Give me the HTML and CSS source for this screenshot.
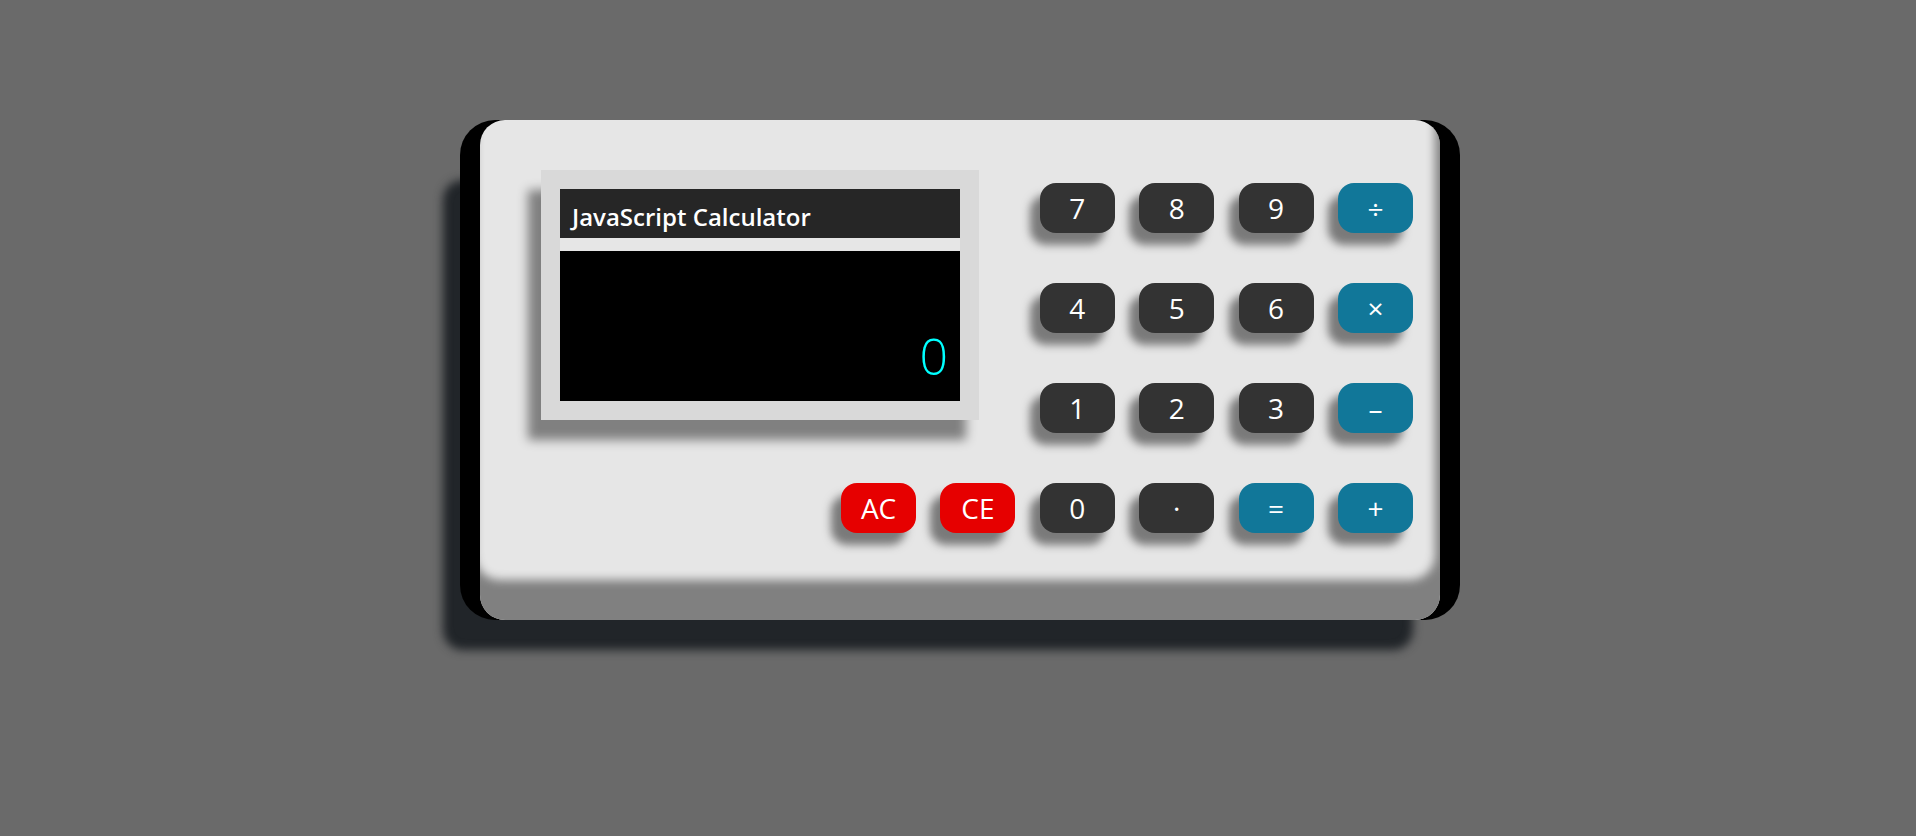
FILE: index.html
```html
<!DOCTYPE html>
<html lang="en">
<head>
<meta charset="utf-8">
<title>JavaScript Calculator</title>
<link rel="stylesheet" href="styles.css">
</head>
<body>
<div class="calc">
  <div class="panel">
    <div class="top">
      <div class="display">
        <div class="title">JavaScript Calculator</div>
        <div class="screen"><span class="value">0</span></div>
      </div>
      <div class="keypad">
        <div class="key num">7</div>
        <div class="key num">8</div>
        <div class="key num">9</div>
        <div class="key op">÷</div>
        <div class="key num">4</div>
        <div class="key num">5</div>
        <div class="key num">6</div>
        <div class="key op">×</div>
        <div class="key num">1</div>
        <div class="key num">2</div>
        <div class="key num">3</div>
        <div class="key op">–</div>
      </div>
    </div>
    <div class="bottom">
      <div class="key clear">AC</div>
      <div class="key clear">CE</div>
      <div class="key num">0</div>
      <div class="key num">·</div>
      <div class="key op">=</div>
      <div class="key op">+</div>
    </div>
  </div>
</div>
</body>
</html>
```
FILE: styles.css
```css
html {
  background: #6a6a6a;
  height: 100%;
}
body {
  margin: 0;
  min-height: 100%;
  box-sizing: border-box;
  padding: 120px 0 0 4px;
  font-family: "Open Sans", "Noto Sans", sans-serif;
  overflow: hidden;
}
.calc {
  width: 1000px;
  height: 500px;
  margin: 0 auto;
  background: #000;
  border-radius: 35px;
  box-shadow: -32px 45px 10px -15px #212529;
  display: flex;
  justify-content: center;
}
.panel {
  width: 960px;
  height: 500px;
  box-sizing: border-box;
  background: #e6e6e6;
  border-radius: 25px;
  box-shadow: inset -5px -40px 10px #808080;
  padding: 50px 27px 0 61px;
  display: flex;
  flex-direction: column;
  gap: 50px;
}
.top {
  display: flex;
  justify-content: space-between;
  align-items: flex-start;
}
.display {
  width: 438px;
  height: 250px;
  box-sizing: border-box;
  padding: 19px;
  background: #d9d9d9;
  box-shadow: -13px 20px 10px #808080;
  display: flex;
  flex-direction: column;
}
.title {
  height: 62px;
  box-sizing: border-box;
  background: #262626;
  border-bottom: 13px solid #e6e6e6;
  color: #fff;
  font-weight: 600;
  font-size: 24px;
  line-height: 32px;
  padding: 12px 12px 0;
  white-space: nowrap;
}
.screen {
  flex: 1;
  background: #000;
  display: flex;
  align-items: flex-end;
  justify-content: flex-end;
  padding: 0 12px 20px;
}
.value {
  color: #00ffff;
  font-weight: 300;
  font-size: 50px;
  line-height: 1;
}
.keypad {
  margin-top: 13px;
  display: grid;
  grid-template-columns: repeat(4, 75px);
  column-gap: 24.4px;
  row-gap: 50px;
}
.bottom {
  display: grid;
  grid-template-columns: repeat(6, 75px);
  column-gap: 24.4px;
  justify-content: end;
}
.key {
  height: 50px;
  border-radius: 16px;
  display: flex;
  align-items: center;
  justify-content: center;
  color: #fff;
  font-size: 28px;
  line-height: 1;
  box-shadow: -10px 12px 8px #7a7a7a;
}
.num {
  background: #333333;
}
.op {
  background: #117799;
}
.clear {
  background: #e60000;
}
```
